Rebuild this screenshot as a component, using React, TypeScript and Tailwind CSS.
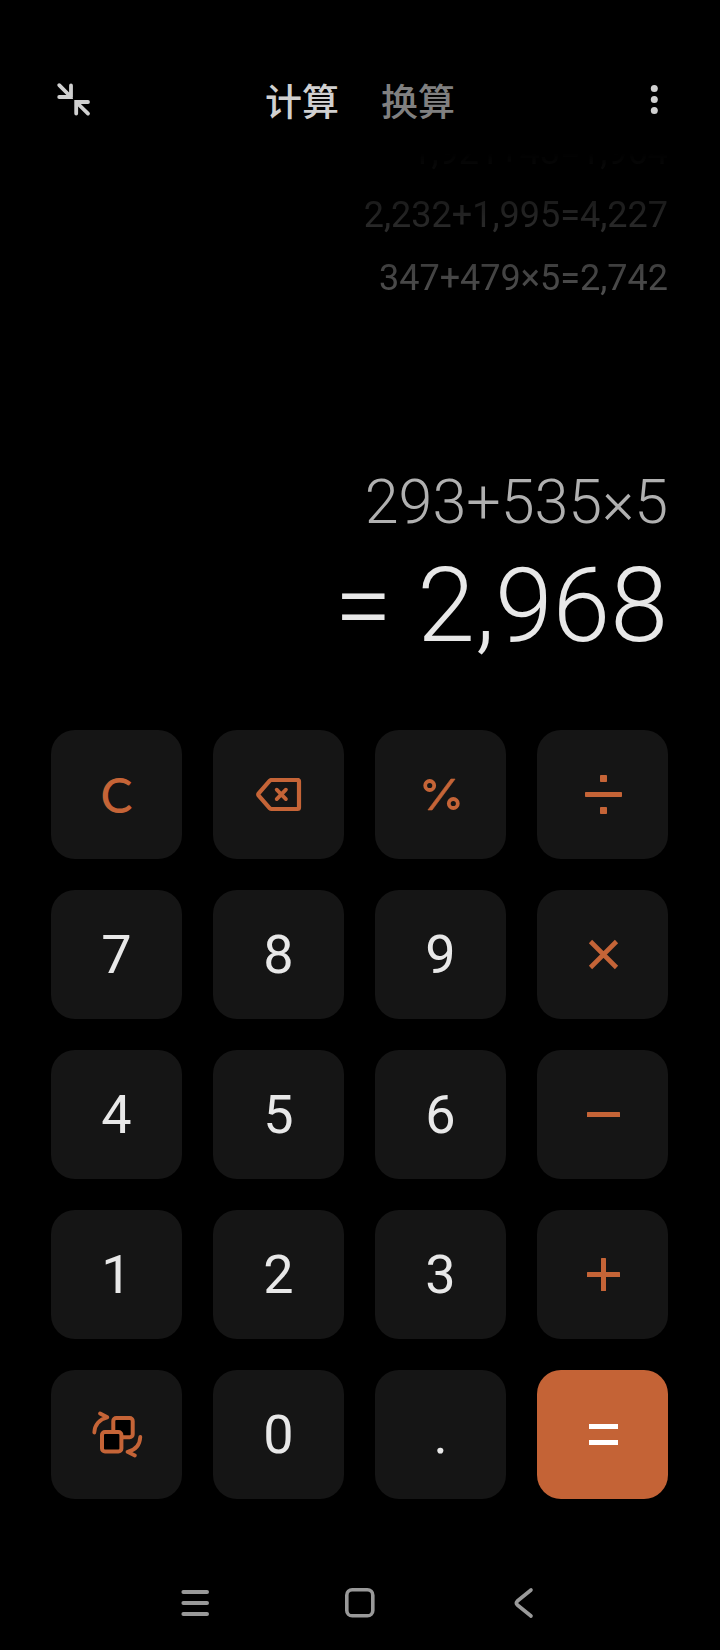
import React, { useState } from "react";

type KeyTone = "digit" | "operator" | "equals";

interface CalcKey {
  id: string;
  label: string;
  tone: KeyTone;
  content: React.ReactNode;
}

const HISTORY = ["1,921+43=1,964", "2,232+1,995=4,227", "347+479×5=2,742"];

const TONE_CLASSES: Record<KeyTone, string> = {
  digit: "bg-[#151515] text-[#e8e8e8] text-[54px]",
  operator: "bg-[#151515] text-[#c56437] text-[48px]",
  equals: "bg-[#c46336] text-white",
};

function BackspaceIcon() {
  return (
    <svg width="46" height="34" viewBox="0.5 0.5 46 34" fill="none" stroke="currentColor" strokeLinecap="round" strokeLinejoin="round">
      <path d="M16 2.5H42Q43.5 2.5 43.5 4V30Q43.5 31.5 42 31.5H16Q15 31.5 14.3 30.8L3.2 18.2Q2.3 17 3.2 15.8L14.3 3.2Q15 2.5 16 2.5Z" strokeWidth="4.2" />
      <path d="M21.2 12.2L30.4 21.6M30.4 12.2L21.2 21.6" strokeWidth="3.8" />
    </svg>
  );
}

function PercentIcon() {
  return (
    <svg width="40" height="40" viewBox="0.5 0.5 40 40" fill="none" stroke="currentColor">
      <circle cx="9.2" cy="11" r="4.5" strokeWidth="3.8" />
      <circle cx="32.8" cy="29" r="4.5" strokeWidth="3.8" />
      <path d="M30.4 4.5H34.6L11.6 35.5H7.4Z" fill="currentColor" strokeWidth="0.6" strokeLinejoin="round" />
    </svg>
  );
}

function DivideIcon() {
  return (
    <svg width="40" height="40" viewBox="0.5 0.5 40 40" fill="currentColor">
      <rect x="17.5" y="0.5" width="7" height="7" rx="0.8" />
      <rect x="2.5" y="17.5" width="37" height="5" rx="0.8" />
      <rect x="17.5" y="32.5" width="7" height="7" rx="0.8" />
    </svg>
  );
}

function MultiplyIcon() {
  return (
    <svg width="40" height="40" viewBox="0.5 0.5 40 40" stroke="currentColor" strokeWidth="4.6">
      <path d="M8 7L34 33M34 7L8 33" />
    </svg>
  );
}

function MinusIcon() {
  return (
    <svg width="40" height="40" viewBox="0.5 0.5 40 40" fill="currentColor">
      <rect x="4.5" y="17.5" width="33" height="5" rx="0.6" />
    </svg>
  );
}

function PlusIcon() {
  return (
    <svg width="40" height="40" viewBox="0.5 0.5 40 40" fill="currentColor">
      <rect x="4.5" y="17.5" width="33" height="5" rx="0.6" />
      <rect x="18.5" y="3.5" width="5" height="33" rx="0.6" />
    </svg>
  );
}

function EqualsIcon() {
  return (
    <svg width="40" height="40" viewBox="0.5 0.5 40 40" fill="currentColor">
      <rect x="6.5" y="9.5" width="29" height="5" />
      <rect x="6.5" y="25.5" width="29" height="5" />
    </svg>
  );
}

function ConvertIcon() {
  return (
    <svg width="52" height="48" viewBox="0.5 0.5 52 48" fill="none" stroke="currentColor" strokeWidth="4" strokeLinecap="round" strokeLinejoin="round">
      <rect x="22.8" y="7.5" width="19.4" height="19.2" rx="3" fill="#000" />
      <rect x="11.5" y="21.5" width="19.4" height="19.4" rx="3" fill="#000" />
      <path d="M3.8 22C4 14.5 9 8.5 16.8 6.8L9.6 3" strokeWidth="3.8" />
      <path d="M49.8 26.4C49.4 34 45 39.6 37 41.4L44.4 45" strokeWidth="3.8" />
    </svg>
  );
}

function CollapseIcon() {
  return (
    <svg width="36" height="36" viewBox="0 0 36 36" fill="none" stroke="currentColor" strokeWidth="3.8" strokeLinecap="round">
      <path d="M3.2 3.2L15 15M15 3.4V15H3.2" />
      <path d="M32 31.6L20.2 20M20.2 31.6V20H32" />
    </svg>
  );
}

function MoreIcon() {
  return (
    <svg width="36" height="36" viewBox="0 0 36 36" fill="currentColor">
      <circle cx="18.3" cy="6.4" r="3.5" />
      <circle cx="18.3" cy="17.5" r="3.5" />
      <circle cx="18.3" cy="28.6" r="3.5" />
    </svg>
  );
}

function digit(value: string): CalcKey {
  return { id: value, label: value, tone: "digit", content: value };
}

const KEYS: CalcKey[] = [
  { id: "clear", label: "C", tone: "operator", content: <span className="font-['Lato',sans-serif] font-medium">C</span> },
  { id: "backspace", label: "退格", tone: "operator", content: <BackspaceIcon /> },
  { id: "percent", label: "%", tone: "operator", content: <PercentIcon /> },
  { id: "divide", label: "÷", tone: "operator", content: <DivideIcon /> },
  digit("7"),
  digit("8"),
  digit("9"),
  { id: "multiply", label: "×", tone: "operator", content: <MultiplyIcon /> },
  digit("4"),
  digit("5"),
  digit("6"),
  { id: "minus", label: "−", tone: "operator", content: <MinusIcon /> },
  digit("1"),
  digit("2"),
  digit("3"),
  { id: "plus", label: "+", tone: "operator", content: <PlusIcon /> },
  { id: "convert", label: "切换", tone: "operator", content: <ConvertIcon /> },
  digit("0"),
  digit("."),
  { id: "equals", label: "=", tone: "equals", content: <EqualsIcon /> },
];

const TABS = ["计算", "换算"];

export default function App() {
  const [activeTab, setActiveTab] = useState("计算");

  return (
    <div className="min-h-screen flex flex-col bg-black font-['Roboto','Noto_Sans_CJK_SC',sans-serif]">
      {/* Top bar */}
      <header className="grid grid-cols-[1fr_auto_1fr] items-center px-12 pt-[74px] pb-[27px] text-[#d0d0d0]">
        <button type="button" aria-label="小窗" className="justify-self-start p-2">
          <CollapseIcon />
        </button>
        <nav className="flex gap-[42px] font-['Noto_Sans_CJK_SC',sans-serif]">
          {TABS.map((tab) => (
            <button
              key={tab}
              type="button"
              onClick={() => setActiveTab(tab)}
              className={
                tab === activeTab
                  ? "text-[37px] leading-[52px] font-medium text-[#d0d0d0]"
                  : "text-[37px] leading-[52px] font-medium text-[#808080]"
              }
            >
              {tab}
            </button>
          ))}
        </nav>
        <button type="button" aria-label="更多" className="justify-self-end py-2">
          <MoreIcon />
        </button>
      </header>

      {/* History fades out towards the top bar */}
      <section className="flex-1 flex flex-col justify-end items-end overflow-hidden pr-[52px] pb-[152px] text-[36px] leading-[63px] text-[#707070] [mask-image:linear-gradient(to_bottom,transparent,black_200px)]">
        <ul className="h-[157px] flex flex-col justify-end text-right">
          {HISTORY.map((entry) => (
            <li key={entry}>{entry}</li>
          ))}
        </ul>
      </section>

      <output className="block pr-[52px] pb-[60px] text-right font-light">
        <p className="text-[61px] leading-[80px] text-[#b0b0b0]">293+535×5</p>
        <p className="text-[104px] leading-[128px] text-[#e8e8e8]">= 2,968</p>
      </output>

      {/* Keypad */}
      <main className="grid grid-cols-4 gap-[31px] pl-[51px] pr-[52px]">
        {KEYS.map((key) => (
          <button
            key={key.id}
            type="button"
            aria-label={key.label}
            className={`h-[129px] rounded-3xl flex items-center justify-center leading-none ${TONE_CLASSES[key.tone]}`}
          >
            {key.content}
          </button>
        ))}
      </main>

      {/* System navigation */}
      <footer className="flex justify-center gap-32 pt-[86px] pb-[29px] text-[#999999]">
        <button type="button" aria-label="最近任务">
          <svg width="36" height="36" viewBox="0 0 36 36" stroke="currentColor" strokeWidth="4" strokeLinecap="round">
            <path d="M5.4 7H29M5.4 18H29M5.4 29H29" />
          </svg>
        </button>
        <button type="button" aria-label="主屏幕">
          <svg width="36" height="36" viewBox="0 0 36 36" fill="none" stroke="currentColor" strokeWidth="3.6">
            <rect x="4.8" y="4.8" width="26" height="26" rx="5.4" />
          </svg>
        </button>
        <button type="button" aria-label="返回">
          <svg width="36" height="36" viewBox="0 0 36 36" fill="none" stroke="currentColor" strokeWidth="3.6" strokeLinecap="round" strokeLinejoin="round">
            <path d="M25 5L11.4 16Q9.4 18 11.4 20L25 31" />
          </svg>
        </button>
      </footer>
    </div>
  );
}
